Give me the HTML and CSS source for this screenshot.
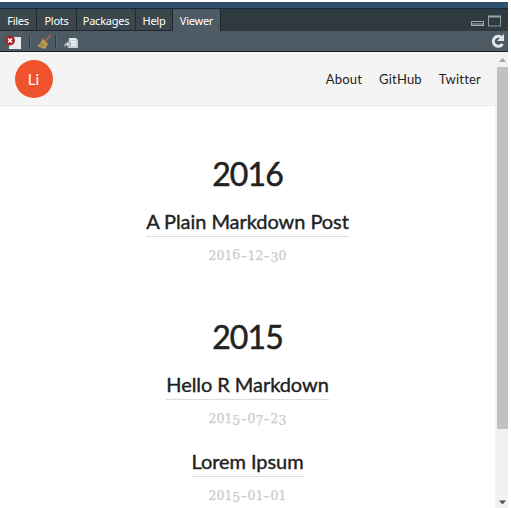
FILE: index.html
```html
<!DOCTYPE html>
<html lang="en">
<head>
<meta charset="utf-8">
<title>Viewer</title>
<link rel="stylesheet" href="styles.css">
</head>
<body>
<div class="pane">
  <div class="strip"></div>
  <div class="tabs">
    <div class="tab files">Files</div>
    <div class="tab plots">Plots</div>
    <div class="tab packages">Packages</div>
    <div class="tab help">Help</div>
    <div class="tab viewer">Viewer</div>
    <svg class="window-icons" width="32" height="14" viewBox="0 0 32 14"><rect x="1.5" y="6.5" width="12" height="4" fill="#65747a" stroke="#a0aaad"/><path d="M2 7.5h11" stroke="#263239"/><rect x="18.5" y="1.500" width="12" height="9.500" fill="none" stroke="#8e999c"/><path d="M18 1.500h13" stroke="#9aa5a8" stroke-width="2"/></svg>
  </div>
  <div class="toolbar">
    <svg class="tools" width="82" height="18" viewBox="0 0 82 18">
      <path d="M11 4h10v12H9V6z" fill="#e9eaea"/>
      <circle cx="10" cy="7.500" r="4.900" fill="#a51f26"/><path d="M8 5.500l4 4m0-4l-4 4" stroke="#fff" stroke-width="1.700"/>
      <path d="M29.500 2v13M55.500 2v13" stroke="#303b43"/><path d="M30.500 2v13M56.500 2v13" stroke="#5d6970"/>
      <path d="M50.500 2l-5 6" stroke="#a96257" stroke-width="1.800"/><path d="M42.500 6l5.500 5-3 5-8-3c2-1 4-3 5.500-7z" fill="#c4a05a"/><path d="M43 6l5 5M40 13l3-3m-1 4l3-3" stroke="#9b7b43" stroke-width="1.200"/>
      <path d="M69 5h7l2 2v8H68z" fill="#c5d0d8"/><path d="M70 6h6M71 9h5M71 12h5" stroke="#f4f6f7" stroke-width="1.300"/><path d="M64 15c0-4 1-5 3-5V8l4 3.500-4 3V12c-1 0-2 1-3 3z" fill="#d5dce1" stroke="#536069" stroke-width=".6"/>
    </svg>
    <svg class="refresh" width="16" height="16" viewBox="0 0 16 16"><path d="M12.500 11A5 5 0 1 1 12 5" fill="none" stroke="#e2e5e8" stroke-width="3"/><path d="M14 1v7H7z" fill="#e2e5e8"/></svg>
  </div>
  <div class="content">
    <main class="page">
      <header class="header">
        <div class="logo">Li</div>
        <nav class="nav"><span>About</span><span>GitHub</span><span>Twitter</span></nav>
      </header>
      <section class="year first"><h1>2016</h1>
        <article><h2><span class="link">A Plain Markdown Post</span></h2><time>201<i class="up">6</i><b>-</b>12<b>-</b><i class="down">3</i>0</time></article>
      </section>
      <section class="year second"><h1>2015</h1>
        <article><h2><span class="link">Hello R Markdown</span></h2><time>201<i class="down">5</i><b>-</b>0<i class="down">7</i><b>-</b>2<i class="down">3</i></time></article>
        <article><h2><span class="link">Lorem Ipsum</span></h2><time>201<i class="down">5</i><b>-</b>01<b>-</b>01</time></article>
      </section>
    </main>
    <div class="scrollbar">
      <svg width="12" height="15" viewBox="0 0 12 15"><path d="M3 10l3.500-4 3.500 4z" fill="#a3a3a3"/></svg>
      <div class="thumb"></div>
      <svg class="arrow-down" width="12" height="15" viewBox="0 0 12 15"><path d="M3 7.500h7l-3.500 4z" fill="#505050"/></svg>
    </div>
  </div>
</div>
</body>
</html>
```
FILE: styles.css
```css
* { box-sizing: border-box; }
body { margin: 0; padding-top: 2px; height: 508px; overflow: hidden; background: #fff; }
svg { display: block; }
.pane { width: 508px; height: 506px; display: flex; flex-direction: column; }
.strip { height: 7px; background: #31506e; border-bottom: 1px solid #14293d; flex: none; }
.tabs { height: 22px; flex: none; display: flex; background: #2f3940; font: 11px/24px "Noto Sans", sans-serif; color: #fff; }
.tab { background: #3a454c; border-right: 1px solid #1c2932; border-bottom: 1px solid #1c2932; text-align: center; height: 22px; border-top-right-radius: 3px; letter-spacing: -.25px; white-space: nowrap; }
.files { width: 37px; }
.plots { width: 40px; }
.packages { width: 59px; }
.help { width: 37px; }
.viewer { width: 48px; background: #4e5b65; border-bottom: 0; }
.window-icons { margin: 6px 6px 0 auto; }
.toolbar { height: 21px; flex: none; display: flex; justify-content: space-between; background: #4e5b65; border-bottom: 1px solid #16202b; padding: 2px 2px 0 0; }
.content { flex: 1; min-height: 0; display: flex; }
.page { width: 495px; overflow: hidden; font-family: Lato, sans-serif; color: #222; text-align: center; }
.header { height: 54px; background: #f4f4f4; border-bottom: 1px solid #e8e8e8; display: flex; align-items: center; justify-content: space-between; padding: 0 14px 0 15px; }
.logo { width: 38px; height: 38px; border-radius: 50%; background: #f0522d; color: #fff; font: 15px/38px Lato, sans-serif; padding-right: 1px; }
.nav { display: flex; gap: 17px; font-size: 13px; letter-spacing: .2px; }
h1, h2 { margin: 0; font-weight: 400; }
h1 { font-size: 32px; line-height: 40px; -webkit-text-stroke: .5px #222; letter-spacing: -.9px; }
h2 { font-size: 20px; line-height: 23px; height: 27px; -webkit-text-stroke: .4px #222; letter-spacing: -.06px; white-space: nowrap; }
.link { display: inline-block; height: 27px; border-bottom: 1px solid #ddd; }
.year { height: 163px; }
.first { margin-top: 48px; }
.second { height: 220px; }
article { padding-top: 16px; height: 77px; }
time { display: block; margin-top: 9px; font: 12.5px/20px "DejaVu Serif", serif; color: #ccc; -webkit-text-stroke: .25px #ccc; }
i { font-style: normal; position: relative; }
b { display: inline-block; width: 7.2px; font-weight: 400; transform: scaleX(1.5); }
.up { top: -1px; }
.down { top: 2px; }
.scrollbar { width: 13px; display: flex; flex-direction: column; background: #f1f1f1; padding-left: 1px; }
.thumb { height: 362px; margin-left: 1px; background: #c1c1c1; }
.arrow-down { margin-top: auto; }
```
